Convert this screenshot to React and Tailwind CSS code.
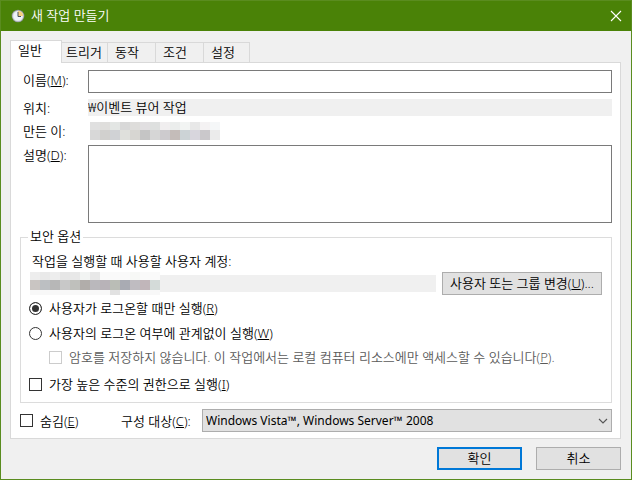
import { useState } from 'react';

const TABS = [
  { name: '일반' },
  { name: '트리거', className: 'w-[46px] pl-1' },
  { name: '동작', className: 'w-[48px] pl-[7px]' },
  { name: '조건', className: 'w-[48px] pl-[7px]' },
  { name: '설정', className: 'w-[46px] pl-[7px]' },
];

// colours of the blocks that hide the account names
const AUTHOR_BLOCKS = [
  ['#e0e0e0', '#dfdedc', '#e3e6e4', '#d8d8d8', '#dedddb', '#e1dfe1', '#dee0df', '#f0eeef', '#ebedec', '#f2f4f3', '#e8e8e8', '#f4f2f3', '#f5f7f8'],
  ['#d8d8d8', '#d1d0ce', '#d0d2d5', '#dfe0dc', '#d7d6d2', '#c5c5c5', '#d6d6d6', '#cdcbce', '#c4bcb9', '#ccd3d6', '#d8d6dd', '#cac8cb', '#ebebeb'],
];
const ACCOUNT_BLOCKS = [
  ['#ededed', '#e9e9e9', '#ededed', '#e6e6e6', '#e8e8e8', '#f2f4f3', '#e8e8e8', '#fafafa', '#fafafa', '#fafafa', '#f7f8f6', '#fafafa', '#fafafa'],
  ['#c9c5c2', '#bcbfc2', '#b7b7b7', '#c8c8c8', '#bfc0bc', '#b1adaa', '#bab8bc', '#b8b3b8', '#babdb6', '#a9abb3', '#bfbcc1', '#c1b6ba', '#d4dbd9'],
  ['#f8f8f8', '#f8f8f8', '#f8f8f8', '#f8f8f8', '#f8f8f8', '#f8f8f8', '#f8f8f8', '#f8f8f8', '#e2e2e2', '#f8f8f8', '#f8f8f8', '#f8f8f8', '#f8f8f8'],
];

function BlockRow({ colors, className }) {
  return (
    <div className={`flex ${className}`}>
      {colors.map((color, i) => (
        <span key={i} className="w-[10px]" style={{ backgroundColor: color }} />
      ))}
    </div>
  );
}

function Key({ children }) {
  return (
    <>
      (<u className="underline underline-offset-1">{children}</u>)
    </>
  );
}

function ClockIcon() {
  return (
    <svg width="14" height="14" viewBox="0 0 14 14" aria-hidden="true">
      <circle cx="7" cy="7" r="6.3" fill="#8d9399" />
      <circle cx="7" cy="7" r="5.6" fill="#d5d9dd" />
      <circle cx="7" cy="7" r="4.6" fill="#eef3fa" />
      <path d="M7 7V1.8A5.2 5.2 0 0 1 12.2 7Z" fill="#f6cf80" />
      <path d="M7 3v4.5h3" fill="none" stroke="#46505c" strokeWidth="1" />
    </svg>
  );
}

function CheckBox({ label, hotkey, suffix, disabled }) {
  return (
    <label className={`flex items-center gap-[7px] ${disabled ? 'text-[#5a5a5a]' : ''}`}>
      <input
        type="checkbox"
        disabled={disabled}
        className="size-[13px] shrink-0 appearance-none border border-[#333333] bg-white checked:bg-[#333333] disabled:border-[#cccccc]"
      />
      <span>{label}<Key>{hotkey}</Key>{suffix}</span>
    </label>
  );
}

function RadioButton({ label, hotkey, checked, onChange }) {
  return (
    <label className="flex items-center gap-[7px]">
      <input
        type="radio"
        name="logon"
        checked={checked}
        onChange={onChange}
        className="size-[13px] shrink-0 appearance-none rounded-full border border-[#333333] bg-white checked:bg-[#333333] checked:shadow-[inset_0_0_0_2px_white]"
      />
      <span>{label}<Key>{hotkey}</Key></span>
    </label>
  );
}

function App() {
  const [tab, setTab] = useState(0);
  const [logon, setLogon] = useState('only');

  return (
    <div className="flex min-h-screen flex-col border border-[#5a8c1f] bg-[#f0f0f0] font-['Noto_Sans','Noto_Sans_CJK_KR',sans-serif] text-[13px] font-[350] leading-4 text-black">
      <header className="flex h-[30px] shrink-0 items-center gap-[6px] bg-[#4a8207] pl-[10px] pr-[9px] text-white">
        <ClockIcon />
        <h1 className="flex-1 pb-[2px] font-[350]">새 작업 만들기</h1>
        <button type="button" aria-label="닫기">
          <svg width="12" height="12" viewBox="0 0 12 12" fill="none" stroke="white" strokeWidth="1.1">
            <path d="M1 1l10 10M11 1L1 11" />
          </svg>
        </button>
      </header>

      <main className="flex flex-1 flex-col pl-[9px] pr-[10px] pt-[9px]">
        <div role="tablist" className="flex items-end">
          {TABS.map(({ name, className }, i) => (
            <button
              key={name}
              type="button"
              role="tab"
              aria-selected={tab === i}
              onClick={() => setTab(i)}
              className={
                tab === i
                  ? 'relative -mb-px h-[23px] w-[52px] border border-b-0 border-[#d9d9d9] bg-white pb-1 pl-[7px] text-left'
                  : `h-[20px] border-r border-t border-[#d9d9d9] pb-[2px] text-left ${className ?? 'w-[48px] pl-[7px]'}`
              }
            >
              {name}
            </button>
          ))}
        </div>

        <div role="tabpanel" className="border border-[#d9d9d9] bg-white pb-[6px] pl-[9px] pr-[8px] pt-[7px]">
          <div className="grid grid-cols-[68px_1fr] gap-y-[6px]">
            <label htmlFor="name" className="pl-[3px] pt-[2px]">이름<Key>M</Key>:</label>
            <input id="name" type="text" className="h-[23px] border border-[#7a7a7a] bg-white px-1 outline-none" />

            <label htmlFor="location" className="self-center pl-[3px]">위치:</label>
            <input id="location" type="text" readOnly value="₩이벤트 뷰어 작업" className="h-[17px] bg-[#f0f0f0] pb-[2px] outline-none" />

            <span className="self-center pl-[3px]">만든 이:</span>
            <div className="h-[17px] pl-[2px]">
              <BlockRow colors={AUTHOR_BLOCKS[0]} className="h-2" />
              <BlockRow colors={AUTHOR_BLOCKS[1]} className="h-[10px]" />
            </div>

            <label htmlFor="description" className="pl-[3px] pt-[2px]">설명<Key>D</Key>:</label>
            <textarea id="description" className="h-[78px] resize-none border border-[#7a7a7a] bg-white px-1 outline-none" />
          </div>

          <fieldset className="mt-[6px] border border-[#dcdcdc] pb-[10px] pl-[7px] pr-[9px]">
            <legend className="h-[17px] px-[2px] leading-[14px]">보안 옵션</legend>
            <p className="mt-[7px] pl-1">작업을 실행할 때 사용할 사용자 계정:</p>
            <div className="mt-[3px] flex items-center pl-[2px]">
              <div>
                <BlockRow colors={ACCOUNT_BLOCKS[0]} className="h-2" />
                <BlockRow colors={ACCOUNT_BLOCKS[1]} className="h-[10px]" />
                <BlockRow colors={ACCOUNT_BLOCKS[2]} className="h-[5px]" />
              </div>
              <div className="mr-[6px] h-[17px] flex-1 bg-[#f0f0f0]" />
              <button type="button" className="h-[23px] w-[160px] border border-[#adadad] bg-[#e1e1e1] pb-[2px] whitespace-nowrap">
                사용자 또는 그룹 변경<Key>U</Key>...
              </button>
            </div>
            <div className="mt-[5px] flex flex-col gap-[9px] pl-px">
              <RadioButton
                label="사용자가 로그온할 때만 실행"
                hotkey="R"
                checked={logon === 'only'}
                onChange={() => setLogon('only')}
              />
              <RadioButton
                label="사용자의 로그온 여부에 관계없이 실행"
                hotkey="W"
                checked={logon === 'any'}
                onChange={() => setLogon('any')}
              />
            </div>
            <div className="mt-2 pl-[21px]">
              <CheckBox
                label="암호를 저장하지 않습니다. 이 작업에서는 로컬 컴퓨터 리소스에만 액세스할 수 있습니다"
                hotkey="P"
                suffix="."
                disabled
              />
            </div>
            <div className="mt-[11px] pl-px">
              <CheckBox label="가장 높은 수준의 권한으로 실행" hotkey="I" />
            </div>
          </fieldset>

          <div className="mt-[6px] flex items-center">
            <div className="w-[101px]">
              <CheckBox label="숨김" hotkey="E" />
            </div>
            <label htmlFor="target" className="w-[81px]">구성 대상<Key>C</Key>:</label>
            <div className="relative flex-1">
              <select id="target" className="block h-[23px] w-full appearance-none border border-[#adadad] bg-[#e1e1e1] pl-[3px] text-[12px] font-normal">
                <option>Windows Vista™, Windows Server™ 2008</option>
              </select>
              <svg className="pointer-events-none absolute right-1 top-[9px]" width="10" height="6" viewBox="0 0 10 6" fill="none" stroke="#555555" strokeWidth="1.1">
                <path d="M1 1l4 4 4-4" />
              </svg>
            </div>
          </div>
        </div>

        <div className="mt-2 flex justify-end gap-[14px] pb-[9px]">
          <button type="button" className="h-[23px] w-[85px] border-2 border-[#0078d7] bg-[#e1e1e1] pb-[2px]">확인</button>
          <button type="button" className="h-[23px] w-[85px] border border-[#adadad] bg-[#e1e1e1] pb-[2px]">취소</button>
        </div>
      </main>
    </div>
  );
}

export default App;
